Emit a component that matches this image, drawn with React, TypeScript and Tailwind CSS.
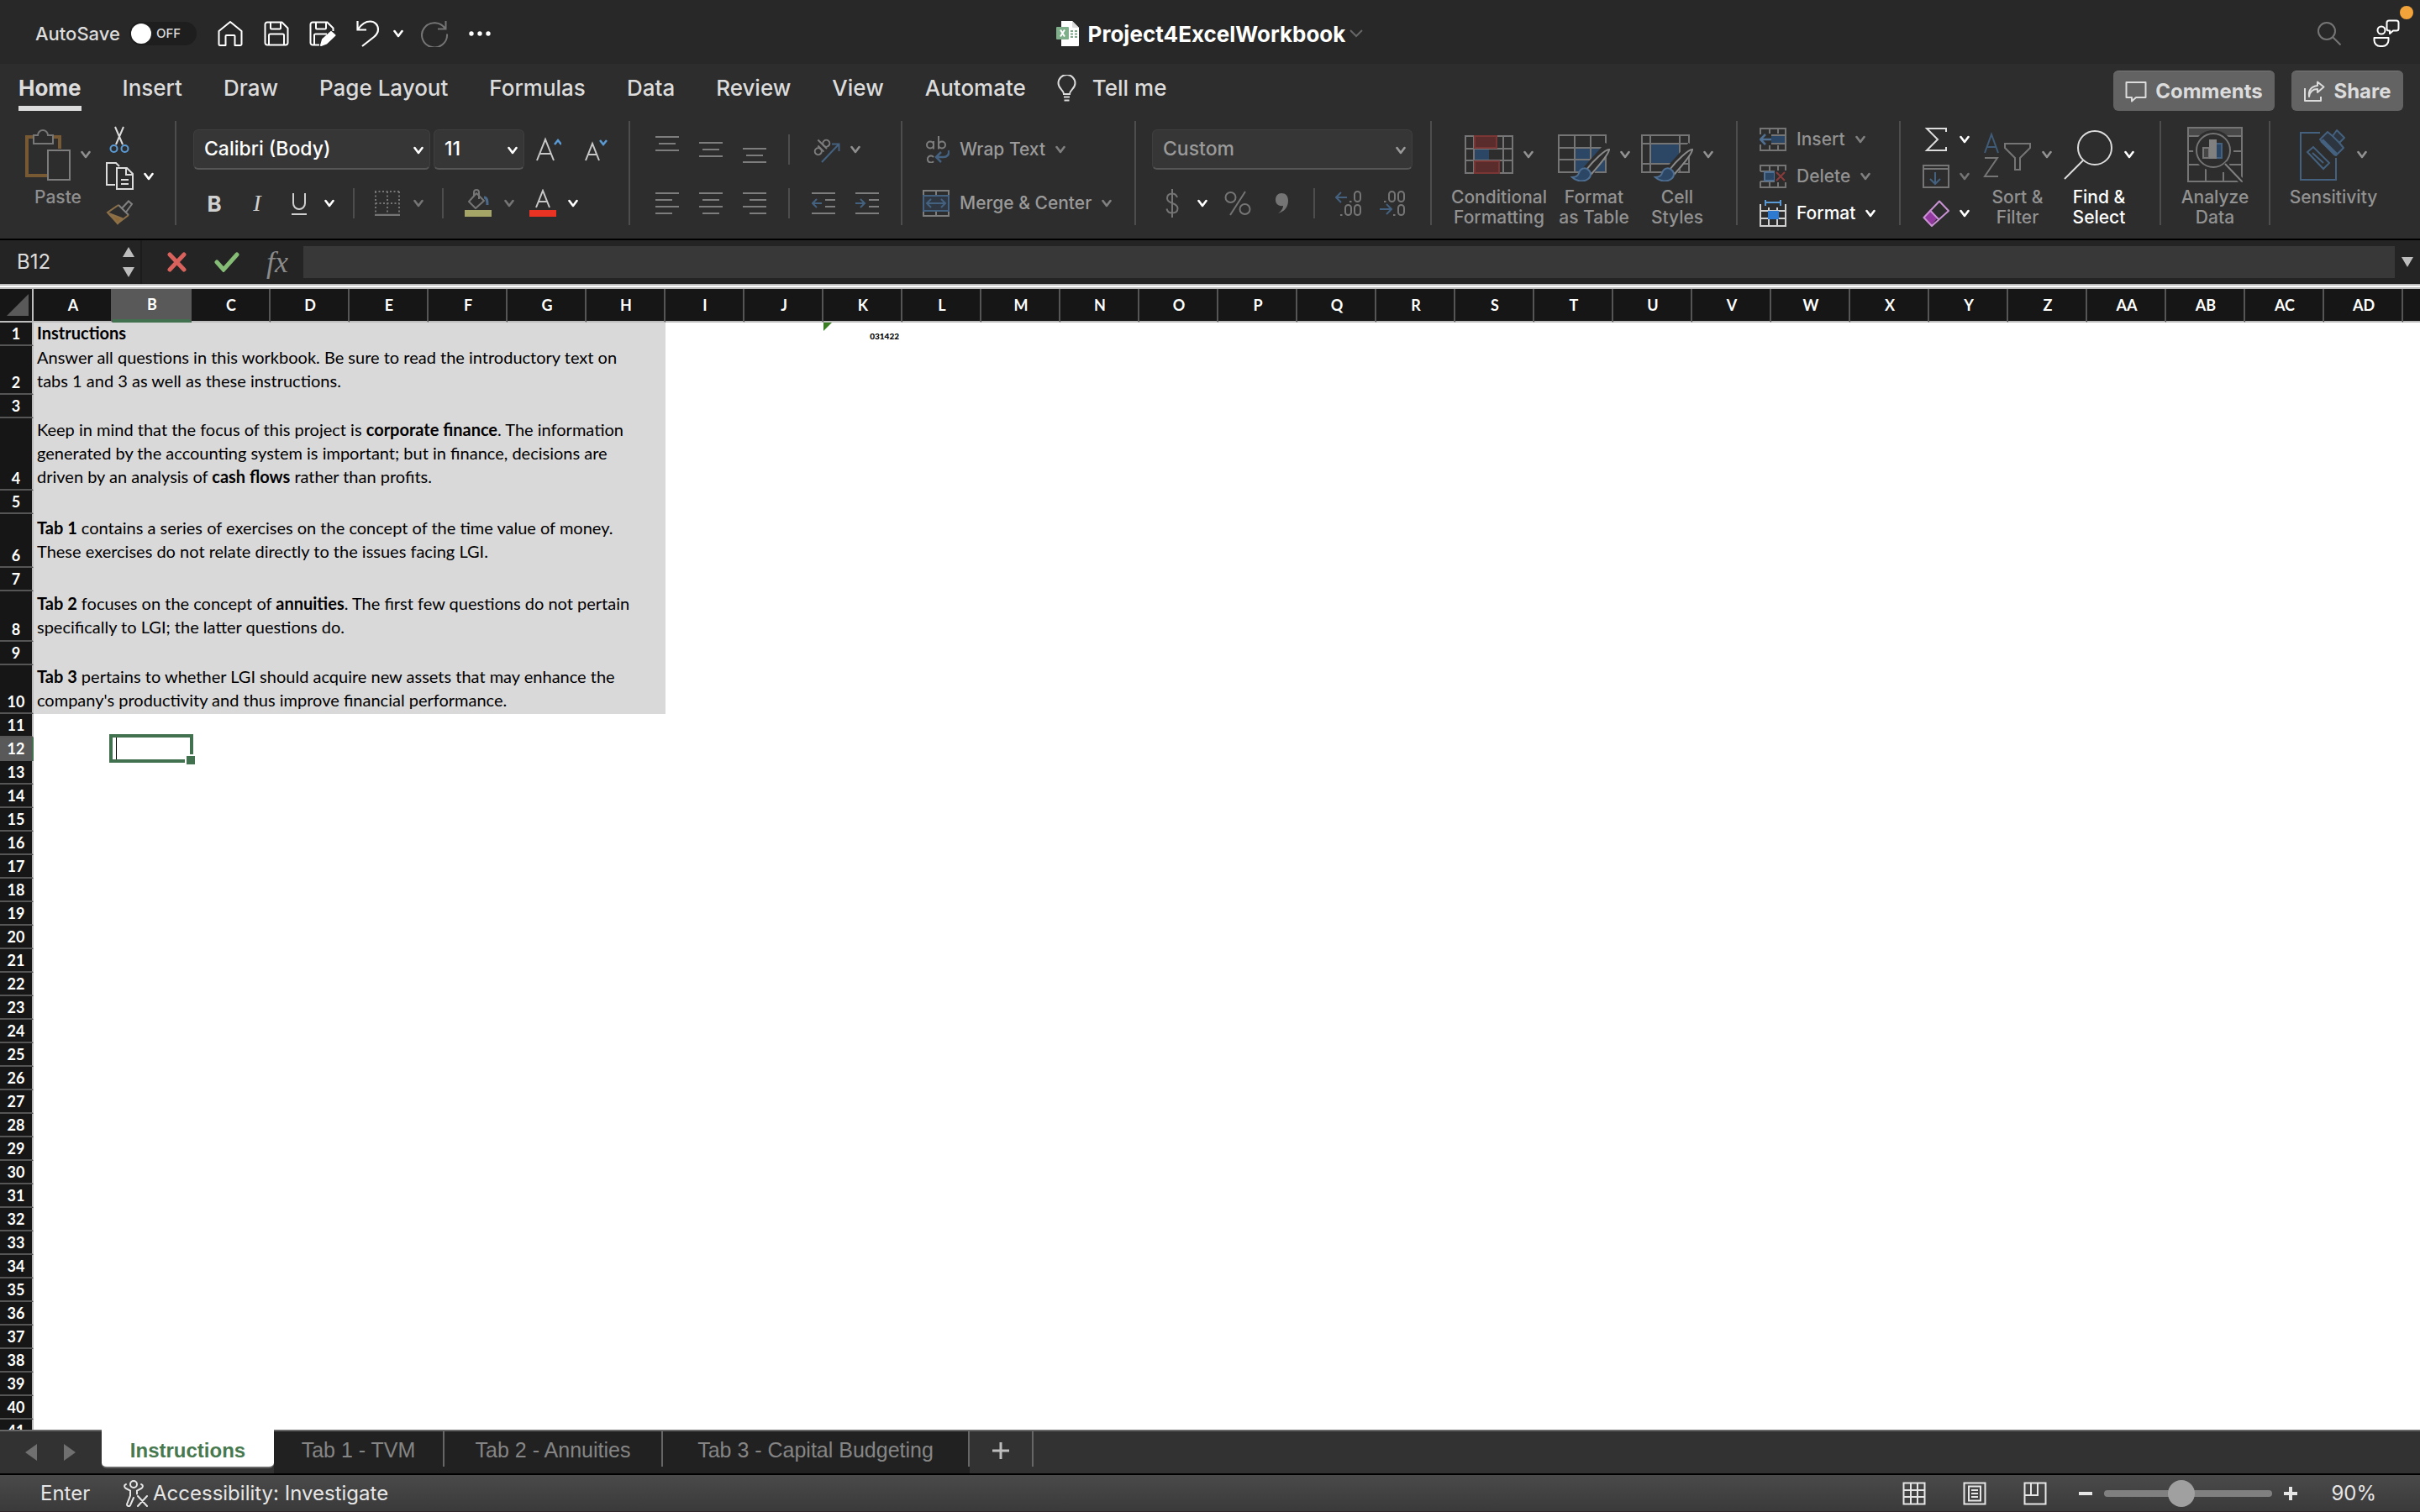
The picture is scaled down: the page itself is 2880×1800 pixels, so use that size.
import React from "react";

type IconProps = { w: number; h: number; className?: string; children: React.ReactNode };

function Icon({ w, h, className = "", children }: IconProps) {
  return (
    <svg
      width={w}
      height={h}
      viewBox={`0 0 ${w} ${h}`}
      fill="none"
      stroke="currentColor"
      strokeWidth={2}
      aria-hidden="true"
      className={`shrink-0 ${className}`}
    >
      {children}
    </svg>
  );
}

function Chevron({ className = "" }: { className?: string }) {
  return (
    <Icon w={12} h={10} className={className}>
      <path d="M1.500 2 6 8l4.500-6" strokeWidth={2.600} strokeLinecap="round" strokeLinejoin="round" />
    </Icon>
  );
}

/* ---------- Title bar ---------- */

function TitleBar() {
  return (
    <header className="grid h-[76px] shrink-0 grid-cols-[1fr_auto_1fr] items-center bg-[#282828] pt-1 text-white">
      <div className="flex items-center pl-[42px]">
        <span className="w-[112px] text-[22px] font-medium text-[#dcdcdc]">AutoSave</span>
        <button
          role="switch"
          aria-checked="false"
          aria-label="AutoSave"
          className="flex h-7 w-20 items-center gap-1.5 rounded-full bg-[#1e1e1e] pl-0.5 text-[15px] font-medium text-[#dcdcdc]"
        >
          <span className="size-6 rounded-full bg-white" />
          OFF
        </button>
        <button aria-label="Home" className="ml-6">
          <Icon w={32} h={32}>
            <path d="M2.500 13 16 2l13.500 11v15.500a1.500 1.500 0 0 1-1.500 1.500h-6.500V19a1 1 0 0 0-1-1h-9a1 1 0 0 0-1 1v11H4a1.500 1.500 0 0 1-1.500-1.500z" strokeLinejoin="round" />
          </Icon>
        </button>
        <button aria-label="Save" className="ml-6">
          <Icon w={30} h={30}>
            <path d="M4 1.500h17.500l7 7V26a2.500 2.500 0 0 1-2.500 2.500H4A2.500 2.500 0 0 1 1.500 26V4A2.500 2.500 0 0 1 4 1.500z" strokeLinejoin="round" />
            <path d="M8 2v6.500a1 1 0 0 0 1 1h10a1 1 0 0 0 1-1V2M6 28V17a1.500 1.500 0 0 1 1.500-1.500h15A1.500 1.500 0 0 1 24 17v11" />
          </Icon>
        </button>
        <button aria-label="Save As" className="ml-6">
          <Icon w={32} h={30}>
            <path d="M12 28.500H4A2.500 2.500 0 0 1 1.500 26V4A2.500 2.500 0 0 1 4 1.500h17.500l7 7V12M8 2v6.500a1 1 0 0 0 1 1h10a1 1 0 0 0 1-1V2M6 28V17a1.500 1.500 0 0 1 1.500-1.500H21" />
            <path d="m14 29 2-7 10-9 4.500 4-10 9.500z" fill="currentColor" strokeLinejoin="round" />
          </Icon>
        </button>
        <button aria-label="Undo" className="ml-6">
          <Icon w={28} h={32}>
            <path d="M1.500 1v10.500H12M2 11C6 5 11 1.500 16.500 1.500c5.500 0 9.500 4 9.500 9.500 0 3.500-2 6.500-5 9L7 31" strokeWidth={2.200} />
          </Icon>
        </button>
        <button aria-label="Undo history" className="ml-4">
          <Chevron />
        </button>
        <button aria-label="Redo" className="ml-5 text-[#757575]">
          <Icon w={34} h={32}>
            <path d="M30.500 1v9.500H21M30 10.500A15 14.500 0 1 0 32 16.500" />
          </Icon>
        </button>
        <button aria-label="More" className="ml-6">
          <Icon w={28} h={8}>
            <g fill="currentColor" stroke="none">
              <circle cx="3" cy="4" r="2.700" />
              <circle cx="13" cy="4" r="2.700" />
              <circle cx="23" cy="4" r="2.700" />
            </g>
          </Icon>
        </button>
      </div>
      <button className="flex items-center text-[26px] font-bold">
        <Icon w={28} h={30} className="mr-2.5">
          <path d="M6 0h13l8 8v21a1 1 0 0 1-1 1H6z" fill="#fff" stroke="none" />
          <path d="M19 0v7a1 1 0 0 0 1 1h7" fill="#ddd" stroke="none" />
          <path d="M17 12h3M22 12h3M17 15.500h3M22 15.500h3M17 19h3M22 19h3" stroke="#7fa88a" />
          <rect x="0" y="7" width="15" height="15" rx="1" fill="#7fae8a" stroke="none" />
          <path d="m5 10.500 5 8M10 10.500l-5 8" stroke="#fff" />
        </Icon>
        Project4ExcelWorkbook
        <Icon w={18} h={12} className="ml-1 text-[#666]">
          <path d="m2 2 7 7 7-7" />
        </Icon>
      </button>
      <div className="flex items-center justify-end pr-6">
        <button aria-label="Search" className="mr-[38px] text-[#757575]">
          <Icon w={28} h={28}>
            <circle cx="11" cy="11" r="10" />
            <path d="m18 18 9.500 9.500" />
          </Icon>
        </button>
        <button aria-label="Share activity" className="relative">
          <Icon w={32} h={34}>
            <circle cx="10" cy="13" r="4.500" />
            <path d="M1.500 22h17v3a7 7 0 0 1-7 7h-3a7 7 0 0 1-7-7zM19 1.500h9A2.500 2.500 0 0 1 30.500 4v7a2.500 2.500 0 0 1-2.500 2.500h-4l-4 3.500v-3.500h-1A2.500 2.500 0 0 1 16.500 11V4A2.500 2.500 0 0 1 19 1.500z" strokeLinejoin="round" />
          </Icon>
          <span className="absolute -top-4 -right-4 size-4 rounded-full bg-[#f2a33a]" />
        </button>
      </div>
    </header>
  );
}

/* ---------- Ribbon tabs ---------- */

const ribbonTabs = ["Insert", "Draw", "Page Layout", "Formulas", "Data", "Review", "View", "Automate"];

function RibbonTabs() {
  return (
    <div className="flex h-[68px] shrink-0 items-start justify-between pr-5 pl-[22px] text-[26px] font-medium text-[#dcdcdc]">
      <nav className="flex gap-[49px] pt-3 leading-[34px]">
        <button className="flex h-11 flex-col items-center border-b-6 border-[#dcdcdc] font-bold">Home</button>
        {ribbonTabs.map((tab) => (
          <button key={tab} className="h-[34px]">
            {tab}
          </button>
        ))}
        <button className="-ml-3 flex h-[34px] items-center gap-[18px]">
          <Icon w={24} h={32}>
            <path d="M8 23c0-5-6.500-6-6.500-13a10 10 0 0 1 20 0c0 7-6.500 8-6.500 13zM8 26.500h7M8.500 30.500h6" />
          </Icon>
          Tell me
        </button>
      </nav>
      <div className="flex gap-5 pt-2 text-[24px] font-bold">
        <button className="flex h-12 w-48 items-center justify-center gap-2.5 rounded-md border-t border-[#777] bg-[#636363]">
          <Icon w={26} h={26}>
            <path d="M1.500 2h23v18H13l-5 4.500V20H1.500z" strokeLinejoin="round" />
          </Icon>
          Comments
        </button>
        <button className="flex h-12 w-[133px] items-center justify-center gap-2.5 rounded-md border-t border-[#777] bg-[#636363]">
          <Icon w={26} h={26}>
            <path d="M2 9v15h19v-5M7 19c1-6 4-9 10-9V14l7.500-6.500L17 1.500V6C10 7 6 11 7 19z" strokeLinejoin="round" />
          </Icon>
          Share
        </button>
      </div>
    </div>
  );
}

/* ---------- Ribbon ---------- */

function Divider({ className = "" }: { className?: string }) {
  return <span className={`h-9 w-0.5 shrink-0 bg-[#4d4d4d] ${className}`} />;
}

function Dropdown({ label, options, className }: { label: string; options: string[]; className: string }) {
  return (
    <div className={`relative h-12 shrink-0 ${className}`}>
      <select
        aria-label={label}
        className="h-full w-full appearance-none rounded-md border border-b-2 border-[#3f3f3f] border-b-[#565656] bg-[#363636] px-3"
        defaultValue={options[0]}
      >
        {options.map((o) => (
          <option key={o}>{o}</option>
        ))}
      </select>
      <Chevron className="pointer-events-none absolute top-5 right-2" />
    </div>
  );
}

function BigButton({
  lines,
  className = "",
  chevron = true,
  children,
}: {
  lines: string[];
  className?: string;
  chevron?: boolean;
  children: React.ReactNode;
}) {
  return (
    <button className={`flex shrink-0 flex-col items-center self-start ${className}`}>
      <span className="flex h-[79px] items-center gap-3">
        {children}
        {chevron && <Chevron />}
      </span>
      {lines.map((l) => (
        <span key={l} className="leading-6 whitespace-nowrap">
          {l}
        </span>
      ))}
    </button>
  );
}

function ClipboardGroup() {
  return (
    <section className="flex w-[210px] shrink-0 border-r-2 border-[#4d4d4d] pl-8">
      <BigButton lines={["Paste"]} className="w-[74px] font-medium text-[#8f8f8f]">
        <Icon w={54} h={62} className="text-[#8a8a8a]">
          <path d="M10 10H2v46h24M34 10h7v14" stroke="#775a34" strokeWidth={4} />
          <path d="M10 8h5a6 6 0 0 1 12 0h6v10H10z" stroke="#777" fill="#2d2d2d" />
          <path d="M27 26h26v35H27z" stroke="#7d7d7d" />
        </Icon>
      </BigButton>
      <div className="flex flex-col justify-between pt-1.5 pl-5 text-[#dcdcdc]">
        <button aria-label="Cut" className="ml-1 self-start">
          <Icon w={24} h={32}>
            <path d="M7 1 16 22M17 1 8 22" />
            <circle cx="5.500" cy="27" r="4" stroke="#5b9bd5" />
            <circle cx="18.500" cy="27" r="4" stroke="#5b9bd5" />
          </Icon>
        </button>
        <button aria-label="Copy" className="flex items-center gap-3">
          <Icon w={33} h={33}>
            <path d="M11 27H1V1h11l4 4" />
            <path d="M13 7h12l7 7v18H13zM24 7v8h8M18 21h9M18 26h9" />
          </Icon>
          <Chevron className="text-white" />
        </button>
        <button aria-label="Format Painter" className="self-start">
          <Icon w={34} h={31} className="text-[#808080]">
            <path d="m19 11 8-8.500 4 3.500-7 9.500M15 7l12 12" />
            <path d="M15 7 2 16l12 13 13-10" stroke="#8d7048" />
            <path d="m6 18 13 5-5 6z" fill="#8d6a38" stroke="#8d7048" />
          </Icon>
        </button>
      </div>
    </section>
  );
}

function FontGroup() {
  return (
    <section className="flex w-[540px] shrink-0 flex-col gap-3 border-r-2 border-[#4d4d4d] pt-2.5 pl-5 text-white">
      <div className="flex items-center gap-1 text-[23px] font-medium">
        <Dropdown label="Font" options={["Calibri (Body)"]} className="w-[282px]" />
        <Dropdown label="Font size" options={["11"]} className="w-[108px]" />
        <button aria-label="Increase font size" className="ml-2.5">
          <Icon w={30} h={30} className="text-[#c8c8c8]">
            <path d="M1 28 11 3l10 25M4.500 20h13" />
            <path d="m22 9 4-5 4 5" stroke="#5b9bd5" strokeWidth={2.500} />
          </Icon>
        </button>
        <button aria-label="Decrease font size" className="ml-6">
          <Icon w={30} h={30} className="text-[#c8c8c8]">
            <path d="M1 28 9 8l8 20M4 21h10" />
            <path d="m18 4 4 5 4-5" stroke="#5b9bd5" strokeWidth={2.500} />
          </Icon>
        </button>
      </div>
      <div className="flex h-14 shrink-0 items-center pl-3.5 text-[26px] text-[#d0d0d0]">
        <button className="w-[22px] font-bold">B</button>
        <button className="ml-7 w-6 font-['Liberation_Serif'] text-[28px] italic">I</button>
        <button aria-label="Underline" className="ml-7">
          <Icon w={20} h={30}>
            <path d="M3 3v12a7 7 0 0 0 14 0V3M1 28h18" />
          </Icon>
        </button>
        <button aria-label="Underline options" className="ml-5 text-white">
          <Chevron />
        </button>
        <Divider className="ml-[22px]" />
        <button aria-label="Borders" className="ml-6 flex items-center gap-4 text-[#757575]">
          <Icon w={30} h={30}>
            <path d="M0 1h30M1 1v28M29 1v28M15 1v28M1 15h28" strokeDasharray="2 2.500" />
            <path d="M0 29h30" strokeWidth={2.500} />
          </Icon>
          <Chevron />
        </button>
        <Divider className="ml-[22px]" />
        <button aria-label="Fill color" className="ml-6 flex items-center gap-3.5 text-[#757575]">
          <Icon w={34} h={34}>
            <path d="m6 15 9-10 9 9-10 9zM12 9V4a3 3 0 0 1 6 0v8" strokeLinejoin="round" />
            <path d="M24 10c4 0 4 5 4 9" stroke="#4c6a8a" strokeWidth={3} />
            <path d="M1 29h32" stroke="#a5a567" strokeWidth={8} />
          </Icon>
          <Chevron />
        </button>
        <button aria-label="Font color" className="ml-[18px] flex items-center gap-3.5 text-[#c8c8c8]">
          <Icon w={32} h={34}>
            <path d="M8 22 16 2l8 20M11 15h10" />
            <path d="M0 29h32" stroke="#ea3323" strokeWidth={8} />
          </Icon>
          <Chevron className="text-white" />
        </button>
      </div>
    </section>
  );
}

function Lines({ label, d, children }: { label: string; d: string; children?: React.ReactNode }) {
  return (
    <button aria-label={label}>
      <Icon w={28} h={32}>
        <path d={d} />
        {children}
      </Icon>
    </button>
  );
}

function AlignmentGroup() {
  return (
    <section className="flex w-[324px] shrink-0 flex-col gap-7 border-r-2 border-[#4d4d4d] pt-4 pl-[30px] text-[#7d7d7d]">
      <div className="flex h-9 items-center gap-6">
        <Lines label="Top Align" d="M0 1h28M4 9h20M0 17h28" />
        <Lines label="Middle Align" d="M0 8h28M4 16h20M0 24h28" />
        <Lines label="Bottom Align" d="M0 15h28M4 23h20M0 31h28" />
        <Divider className="mx-0.5" />
        <button aria-label="Orientation" className="flex items-center gap-3">
          <Icon w={34} h={32}>
            <g transform="rotate(-45 12 14)">
              <circle cx="6" cy="14" r="4" />
              <path d="M10.500 9v10M15.500 4v15" />
              <circle cx="19.500" cy="14" r="4" />
            </g>
            <path d="M12 31 32 10M24 9.500h8.500V18" stroke="#44617f" />
          </Icon>
          <Chevron className="text-[#8f8f8f]" />
        </button>
      </div>
      <div className="flex h-9 items-center gap-6">
        <Lines label="Align Left" d="M0 4h28M0 12h20M0 20h28M0 28h20" />
        <Lines label="Center" d="M0 4h28M4 12h20M0 20h28M4 28h20" />
        <Lines label="Align Right" d="M0 4h28M8 12h20M0 20h28M8 28h20" />
        <Divider className="mx-0.5" />
        <Lines label="Decrease Indent" d="M0 4h28M16 12h12M16 20h12M0 28h28">
          <path d="M1 16h11M6 11l-5 5 5 5" stroke="#44617f" />
        </Lines>
        <Lines label="Increase Indent" d="M0 4h28M16 12h12M16 20h12M0 28h28">
          <path d="M0 16h11M6 11l5 5-5 5" stroke="#44617f" />
        </Lines>
      </div>
    </section>
  );
}

function WrapGroup() {
  return (
    <section className="flex w-[278px] shrink-0 flex-col gap-7 border-r-2 border-[#4d4d4d] pt-4 pl-6 text-[21px] font-medium text-[#9a9a9a]">
      <button className="flex h-9 items-center gap-3">
        <Icon w={32} h={32} className="text-[#7d7d7d]">
          <circle cx="9" cy="10.500" r="4" />
          <path d="M13 6v9.500M19 0v15.500M13 25a4 4 0 1 0 0 5" />
          <circle cx="23" cy="10.500" r="4" />
          <path d="M31 17c1 5-2 8-6 8h-8M22 19l-6 6 6 6" stroke="#44617f" strokeWidth={2.500} />
        </Icon>
        Wrap Text
        <Chevron className="text-[#808080]" />
      </button>
      <button className="flex h-9 items-center gap-3">
        <Icon w={32} h={32}>
          <path d="M1 1h30v30H1zM16 1v6M16 25v6" stroke="#7d7d7d" />
          <path d="M1 7h30v18H1z" stroke="#44617f" fill="#2f3842" />
          <path d="M6 16h20M10 11l-5 5 5 5M22 11l5 5-5 5" stroke="#44617f" />
        </Icon>
        Merge &amp; Center
        <Chevron className="text-[#808080]" />
      </button>
    </section>
  );
}

function NumberGroup() {
  return (
    <section className="flex w-[352px] shrink-0 flex-col gap-3 border-r-2 border-[#4d4d4d] pt-2.5 pl-[19px] text-[23px] font-medium text-[#9a9a9a]">
      <Dropdown label="Number format" options={["Custom"]} className="w-[310px]" />
      <div className="flex h-14 shrink-0 items-center pl-3.5 text-[#757575]">
        <button aria-label="Currency" className="w-6">
          <Icon w={20} h={34}>
            <path d="M16 10c-1-3-3-4.500-6-4.500-3.500 0-6 2-6 5.500 0 7.500 12.500 4.500 12.500 12 0 3.500-2.500 5.500-6.500 5.500-3.500 0-6-2-6.500-5M10 0v34" />
          </Icon>
        </button>
        <button aria-label="Currency options" className="ml-4 text-white">
          <Chevron />
        </button>
        <button aria-label="Percent" className="ml-5">
          <Icon w={32} h={30}>
            <circle cx="7.500" cy="8" r="6" />
            <circle cx="24.500" cy="22" r="6" />
            <path d="M25 1 7 29" />
          </Icon>
        </button>
        <button aria-label="Comma style" className="ml-7">
          <Icon w={18} h={28}>
            <path d="M8 2c5 0 8 3 8 9 0 8-5 13-12 15 4-3 6-6 6-9-6 1-9-3-9-7 0-5 3-8 7-8z" fill="currentColor" stroke="none" />
          </Icon>
        </button>
        <Divider className="ml-7" />
        <button aria-label="Increase decimal" className="ml-6">
          <Icon w={32} h={32}>
            <path d="M1 9h13M7 3 1 9l6 6" stroke="#44617f" />
            <rect x="23" y="2" width="7" height="12" rx="3.500" />
            <rect x="12" y="18" width="7" height="12" rx="3.500" />
            <rect x="23" y="18" width="7" height="12" rx="3.500" />
            <path d="M17 14h2.500M6 30h2.500" />
          </Icon>
        </button>
        <button aria-label="Decrease decimal" className="ml-5">
          <Icon w={32} h={32}>
            <path d="M1 23h13M9 17l6 6-6 6" stroke="#44617f" />
            <rect x="12" y="2" width="7" height="12" rx="3.500" />
            <rect x="23" y="2" width="7" height="12" rx="3.500" />
            <rect x="23" y="18" width="7" height="12" rx="3.500" />
            <path d="M6 14h2.500M17 30h2.500" />
          </Icon>
        </button>
      </div>
    </section>
  );
}

function Brush() {
  return (
    <g>
      <path d="M57 14 32 42l7 5 21-31z" fill="#2d2d2d" stroke="#2d2d2d" strokeWidth={6} />
      <path d="M61 18c-4-.500-19 13-27 24l6 5c8-9 21-24 21-29z" fill="#2d2d2d" stroke="#8a8a8a" />
      <path d="M17 51c5 0 7-2 8-5 2-6 7-7 11-4s4 8 0 11c-5 4-14 3-19-2z" fill="#2c4766" stroke="#4f7093" />
    </g>
  );
}

function StylesGroup() {
  return (
    <section className="flex w-[364px] shrink-0 border-r-2 border-[#4d4d4d] pl-4 text-[21px] font-medium text-[#929292]">
      <BigButton lines={["Conditional", "Formatting"]} className="w-32">
        <Icon w={58} h={46}>
          <path d="M12 1h26v14H12zM12 31h29v14H12z" fill="#5a2c2c" stroke="none" />
          <path d="M12 16h17v14H12z" fill="#2c4766" stroke="none" />
          <path d="M1 1h56v44H1zM1 16h56M1 30h56M11 1v44M46 1v44" stroke="#757575" />
          <path d="M12 1h26v14H12zM12 31h29v14H12z" stroke="#7a3535" />
        </Icon>
      </BigButton>
      <BigButton lines={["Format", "as Table"]} className="w-[98px]">
        <Icon w={62} h={56} className="mt-2">
          <path d="M20 16h36v29H20z" fill="#2c4766" stroke="none" />
          <path d="M1 1h56v44H1zM1 16h56M1 30h56M20 1v44M39 1v44" stroke="#757575" />
          <Brush />
        </Icon>
      </BigButton>
      <BigButton lines={["Cell", "Styles"]} className="w-[100px]">
        <Icon w={62} h={56} className="mt-2">
          <path d="M12 12h34v22H12z" fill="#2c4766" stroke="none" />
          <path d="M1 1h56v44H1zM1 11h56M1 35h56M11 1v44M46 1v44" stroke="#757575" />
          <Brush />
        </Icon>
      </BigButton>
    </section>
  );
}

function CellsGroup() {
  return (
    <section className="flex w-[194px] shrink-0 flex-col border-r-2 border-[#4d4d4d] pl-[26px] text-[21px] font-medium text-[#929292]">
      <button className="flex h-11 shrink-0 items-center gap-3">
        <Icon w={32} h={28}>
          <path d="M14 9h17v10H14z" fill="#2c4766" stroke="none" />
          <path d="M1 8V1h30v26H1v-7M12 1v6M22 1v6M12 21v6M22 21v6M14 9h17M14 19h17" stroke="#757575" />
          <path d="M1 14h13M7 8l-6 6 6 6" stroke="#4f7093" strokeWidth={2.500} />
        </Icon>
        Insert
        <Chevron className="text-[#808080]" />
      </button>
      <button className="flex h-11 shrink-0 items-center gap-3">
        <Icon w={32} h={28}>
          <path d="M1 8V1h30v7M1 20v7h30v-7M12 1v7M22 1v7M12 20v7M22 20v7M1 8h30M1 20h30" stroke="#757575" />
          <path d="M6 9h12v10H6z" fill="#2c4766" stroke="#4f7093" />
          <path d="M18 7h14v14H18z" fill="#2d2d2d" stroke="none" />
          <path d="m20 9 10 10M30 9 20 19" stroke="#8a3b3b" />
        </Icon>
        Delete
        <Chevron className="text-[#808080]" />
      </button>
      <button className="flex h-11 shrink-0 items-center gap-3 text-white">
        <Icon w={32} h={32}>
          <path d="M1 5v26h30V5M1 13h30M1 22h30M11 9v22M21 9v22" stroke="#d0d0d0" />
          <path d="M10 13h13v10H10z" fill="#2f7ad1" stroke="none" />
          <path d="M7 3h18M7 0v7M25 0v7" stroke="#5b9bd5" />
        </Icon>
        Format
        <Chevron />
      </button>
    </section>
  );
}

function EditingGroup() {
  return (
    <section className="flex w-[310px] shrink-0 border-r-2 border-[#4d4d4d] pl-[26px] text-[21px] font-medium text-[#929292]">
      <div className="flex w-16 shrink-0 flex-col">
        <button aria-label="AutoSum" className="flex h-11 shrink-0 items-center gap-3 text-white">
          <Icon w={32} h={30} className="text-[#dcdcdc]">
            <path d="M28 6V2H5l13 13L5 28h23v-4" />
          </Icon>
          <Chevron />
        </button>
        <button aria-label="Fill" className="flex h-11 shrink-0 items-center gap-3">
          <Icon w={32} h={28}>
            <path d="M1 1h30v26H1zM1 5h30" stroke="#757575" />
            <path d="M15 9v14M9 17l6 6 6-6" stroke="#44617f" />
          </Icon>
          <Chevron className="text-[#757575]" />
        </button>
        <button aria-label="Clear" className="flex h-11 shrink-0 items-center gap-3 text-white">
          <Icon w={32} h={32}>
            <path d="m1 21 8-10 9 10-8 10z" fill="#93389f" stroke="none" />
            <path d="M20 1.500 31 13 11 31 1.500 21zM9 12.500 19 23" stroke="#c993d3" strokeLinejoin="round" />
          </Icon>
          <Chevron />
        </button>
      </div>
      <BigButton lines={["Sort &", "Filter"]} className="w-[98px]">
        <Icon w={58} h={54}>
          <path d="M2 25 10 3l8 22M5 18h10" stroke="#3f5b78" />
          <path d="M2 31h15L2 53h16" stroke="#757575" />
          <path d="M26 14h30v5L44 31v14h-6V31L26 19z" stroke="#757575" />
        </Icon>
      </BigButton>
      <BigButton lines={["Find &", "Select"]} className="w-24 text-white">
        <Icon w={60} h={60} className="text-[#dcdcdc]">
          <circle cx="37" cy="22" r="20" />
          <path d="M23 37 1 59" />
        </Icon>
      </BigButton>
    </section>
  );
}

function AnalyzeGroup() {
  return (
    <section className="flex w-[130px] shrink-0 justify-center border-r-2 border-[#4d4d4d] text-[21px] font-medium text-[#929292]">
      <BigButton lines={["Analyze", "Data"]} chevron={false}>
        <Icon w={66} h={66}>
          <path d="M1 1h64v9H1z" fill="#484848" stroke="none" />
          <path d="M1 1h64v64H1zM1 11h64M1 29h10M55 29h10M1 45h16M50 45h15M22 50v15M43 54v11" stroke="#757575" />
          <circle cx="31" cy="28" r="24" fill="#2d2d2d" stroke="none" />
          <circle cx="31" cy="28" r="20" stroke="#757575" />
          <path d="m44 44 21 21" stroke="#2d2d2d" strokeWidth={7} />
          <path d="m45 44 20 21" stroke="#808080" />
          <path d="M19 25h7v12h-7z" stroke="#757575" fill="#454545" />
          <path d="M34 20h7v17h-7z" fill="#2c4766" stroke="#44617f" />
          <path d="M26 15h9v23h-9z" fill="#808080" stroke="none" />
        </Icon>
      </BigButton>
    </section>
  );
}

function SensitivityGroup() {
  return (
    <section className="flex min-w-0 flex-1 pl-3.5 text-[21px] font-medium text-[#929292]">
      <BigButton lines={["Sensitivity"]} className="w-[122px]">
        <Icon w={56} h={62} className="text-[#44617f]">
          <path d="M24 5H1v56h42V35" />
          <path d="m9 28 7-6 19 19-7 7zM15 29l13 12" />
          <path d="m24 13 9-9 6 5 5-7 9 9-6 6 5 6-9 9z" fill="#2d3640" strokeLinejoin="round" />
          <path d="m26 14 17 17" strokeWidth={5} />
          <path d="m39 9 8 8" />
        </Icon>
      </BigButton>
    </section>
  );
}

function Ribbon() {
  return (
    <div className="flex h-[142px] shrink-0 border-b-2 border-black pb-4 text-[21px]">
      <ClipboardGroup />
      <FontGroup />
      <AlignmentGroup />
      <WrapGroup />
      <NumberGroup />
      <StylesGroup />
      <CellsGroup />
      <EditingGroup />
      <AnalyzeGroup />
      <SensitivityGroup />
    </div>
  );
}

/* ---------- Formula bar ---------- */

function FormulaBar() {
  return (
    <div className="flex h-[52px] shrink-0 items-center bg-[#242424]">
      <div className="flex h-full w-[169px] items-center border-r-2 border-[#1c1c1c] text-[#bdbdbd]">
        <input
          aria-label="Name box"
          defaultValue="B12"
          className="w-[146px] bg-transparent pl-5 text-[24px] text-[#dcdcdc]"
        />
        <div className="flex flex-col gap-3">
          <button aria-label="Previous name">
            <Icon w={14} h={12}>
              <path d="M7 0l7 12H0z" fill="currentColor" stroke="none" />
            </Icon>
          </button>
          <button aria-label="Next name">
            <Icon w={14} h={12}>
              <path d="M0 0h14L7 12z" fill="currentColor" stroke="none" />
            </Icon>
          </button>
        </div>
      </div>
      <button aria-label="Cancel" className="ml-[30px]">
        <Icon w={24} h={24} className="text-[#d9625c]">
          <path d="m3 3 17 18M20 3 3 21" strokeWidth={5} strokeLinecap="round" />
        </Icon>
      </button>
      <button aria-label="Enter" className="ml-8">
        <Icon w={30} h={24} className="text-[#86bd76]">
          <path d="m3 12 8 9L27 3" strokeWidth={5} strokeLinecap="round" />
        </Icon>
      </button>
      <button className="ml-8 w-11 text-left font-['Liberation_Serif'] text-[36px] leading-[44px] text-[#8a8a8a] italic">
        fx
      </button>
      <input aria-label="Formula" className="h-[38px] min-w-0 flex-1 bg-[#383838] px-2 text-white" />
      <button aria-label="Expand formula bar" className="px-2 text-[#bdbdbd]">
        <Icon w={14} h={12}>
          <path d="M0 0h14L7 12z" fill="currentColor" stroke="none" />
        </Icon>
      </button>
    </div>
  );
}

/* ---------- Sheet ---------- */

const columns = [..."ABCDEFGHIJKLMNOPQRSTUVWXYZ", "AA", "AB", "AC", "AD"];

const notes: { height: string; text: React.ReactNode }[] = [
  { height: "h-7", text: <b>Instructions</b> },
  {
    height: "h-[58px]",
    text: (
      <>
        Answer all questions in this workbook. Be sure to read the introductory text on
        <br />
        tabs 1 and 3 as well as these instructions.
      </>
    ),
  },
  { height: "h-7", text: null },
  {
    height: "h-[86px]",
    text: (
      <>
        Keep in mind that the focus of this project is <b>corporate finance</b>. The information
        <br />
        generated by the accounting system is important; but in finance, decisions are
        <br />
        driven by an analysis of <b>cash flows</b> rather than profits.
      </>
    ),
  },
  { height: "h-7", text: null },
  {
    height: "h-16",
    text: (
      <>
        <b>Tab 1</b> contains a series of exercises on the concept of the time value of money.
        <br />
        These exercises do not relate directly to the issues facing LGI.
      </>
    ),
  },
  { height: "h-7", text: null },
  {
    height: "h-[60px]",
    text: (
      <>
        <b>Tab 2</b> focuses on the concept of <b>annuities</b>. The first few questions do not pertain
        <br />
        specifically to LGI; the latter questions do.
      </>
    ),
  },
  { height: "h-7", text: null },
  {
    height: "h-[58px]",
    text: (
      <>
        <b>Tab 3</b> pertains to whether LGI should acquire new assets that may enhance the
        <br />
        company's productivity and thus improve financial performance.
      </>
    ),
  },
];

const plainRows = Array.from({ length: 31 }, (_, i) => i + 11);

function headerRowColors(n: number) {
  if (n === 12) return "border-r-[#41714f] border-b-[#595959] bg-[#595959]";
  return "border-r-[#bdbdbd] border-b-[#555] bg-[#161616]";
}

function headerColumnColors(c: string) {
  if (c === "B") return "border-b-4 border-r-[#595959] border-b-[#41714f] bg-[#595959]";
  if (c === "A") return "border-b-2 border-r-[#595959] border-b-[#bdbdbd]";
  return "border-b-2 border-r-[#555] border-b-[#bdbdbd]";
}

function RowHeader({ n, height }: { n: number; height: string }) {
  return (
    <th scope="row" className="p-0">
      <div
        className={`flex items-end justify-center border-r-2 border-b-2 text-[18px] leading-[26px] font-bold text-white ${height} ${headerRowColors(n)}`}
      >
        {n}
      </div>
    </th>
  );
}

function Sheet() {
  return (
    <main className="min-h-0 flex-1 overflow-hidden bg-white font-['Lato',sans-serif]">
      <table className="w-full table-fixed border-separate border-spacing-0">
        <thead>
          <tr className="h-10 bg-[#161616] text-[18px] text-white">
            <th className="w-10 border-r-2 border-b-2 border-[#bdbdbd] p-0">
              <Icon w={28} h={26} className="ml-2">
                <path d="M26 0v26H0z" fill="#595959" stroke="none" />
              </Icon>
            </th>
            {columns.map((c) => (
              <th
                key={c}
                scope="col"
                className={`w-[94px] border-r-2 p-0 pl-0.5 font-bold ${headerColumnColors(c)}`}
              >
                {c}
              </th>
            ))}
            <th className="border-b-2 border-[#bdbdbd] p-0" />
          </tr>
        </thead>
        <tbody>
          {notes.map((row, i) => (
            <tr key={i}>
              <RowHeader n={i + 1} height={row.height} />
              <td colSpan={8} className="bg-[#d9d9d9] p-0">
                <div className={`flex items-center pl-1 ${row.height}`}>
                  <p className="-mt-1 text-[20px] leading-7 whitespace-nowrap text-black">{row.text}</p>
                </div>
              </td>
              {columns.slice(8).map((c) => (
                <td key={c} className="p-0 align-top">
                  {i === 0 && c === "K" && (
                    <div className="relative flex h-7 items-center justify-end pt-1 pr-1 text-[10px] font-black text-black">
                      <Icon w={10} h={10} className="absolute top-0 left-0">
                        <path d="M0 0h10L0 10z" fill="#3a7d23" stroke="none" />
                      </Icon>
                      031422
                    </div>
                  )}
                </td>
              ))}
              <td className="p-0" />
            </tr>
          ))}
          {plainRows.map((n) => (
            <tr key={n}>
              <RowHeader n={n} height="h-7" />
              {columns.map((c) => (
                <td key={c} className="p-0">
                  {n === 12 && c === "B" && (
                    <div className="relative h-7">
                      <div className="absolute -top-1 -right-0.5 -bottom-0.5 -left-1 border-4 border-[#41714f] bg-white pl-1">
                        <span className="block h-full w-px bg-black" />
                        <span className="absolute -right-1.5 -bottom-1.5 size-3 border-t-2 border-l-2 border-white bg-[#41714f]" />
                      </div>
                    </div>
                  )}
                </td>
              ))}
              <td className="p-0" />
            </tr>
          ))}
        </tbody>
      </table>
    </main>
  );
}

/* ---------- Sheet tabs and status bar ---------- */

function SheetTabs() {
  return (
    <nav className="flex h-[54px] shrink-0 border-t-2 border-b-2 border-t-[#666] border-b-black bg-[#323232] font-['Liberation_Sans',sans-serif] text-[25px] text-[#858585]">
      <div className="flex w-[121px] items-center gap-8 pl-[30px] text-[#707070]">
        <button aria-label="Previous sheet">
          <Icon w={14} h={20}>
            <path d="M14 0v20L0 10z" fill="currentColor" stroke="none" />
          </Icon>
        </button>
        <button aria-label="Next sheet">
          <Icon w={14} h={20}>
            <path d="M0 0v20l14-10z" fill="currentColor" stroke="none" />
          </Icon>
        </button>
      </div>
      <button className="-mt-0.5 h-[46px] w-[205px] rounded-b-md border-b-2 border-[#666] bg-white pt-1.5 text-[24px] font-bold text-[#47794f]">
        Instructions
      </button>
      <div className="flex bg-[#212121] pb-2">
        <button className="w-[203px] border-r-2 border-[#666] pt-1">Tab 1 - TVM</button>
        <button className="w-[260px] border-r-2 border-[#666] pt-1">Tab 2 - Annuities</button>
        <button className="w-[365px] border-r-2 border-[#666] pt-1">Tab 3 - Capital Budgeting</button>
      </div>
      <button
        aria-label="Add sheet"
        className="mb-2 flex w-[76px] items-center justify-center border-r-2 border-[#666] pt-1 text-[#bdbdbd]"
      >
        <Icon w={20} h={20}>
          <path d="M10 0v20M0 10h20" strokeWidth={3} />
        </Icon>
      </button>
    </nav>
  );
}

function StatusBar() {
  return (
    <footer className="flex h-11 shrink-0 items-center justify-between border-b border-[#2e2528] bg-linear-to-b from-[#4a4a4a] to-[#3a3a3a] pr-[52px] pl-12 text-[24px] text-[#e6e6e6]">
      <div className="flex items-center">
        <span className="w-[98px]">Enter</span>
        <button className="flex items-center gap-1">
          <Icon w={32} h={32}>
            <circle cx="13" cy="5" r="4" />
            <path d="M4 5c-3 1-2 4 0 5l5 2.500v6L5 29c0 2 3 3 4 1l4-9M22 5c3 1 2 4 0 5l-5 2.500v4M18 19l11 12M29 19 18 31" strokeLinecap="round" />
          </Icon>
          Accessibility: Investigate
        </button>
      </div>
      <div className="flex items-center">
        <button aria-label="Normal view">
          <Icon w={28} h={28}>
            <path d="M1.500 1.500h25v25h-25zM10 1v26M18 1v26M1 10h26M1 18h26" />
          </Icon>
        </button>
        <button aria-label="Page layout view" className="ml-11">
          <Icon w={28} h={28}>
            <path d="M1.500 1.500h25v25h-25zM7 5.500h14v17H7zM10 10h8M10 14h8M10 18h8" />
          </Icon>
        </button>
        <button aria-label="Page break view" className="ml-11">
          <Icon w={28} h={28}>
            <path d="M1.500 1.500h25v25h-25zM1 16h16V1M9 1v15" />
          </Icon>
        </button>
        <button aria-label="Zoom out" className="ml-[38px]">
          <Icon w={16} h={16}>
            <path d="M0 8h16" strokeWidth={4} />
          </Icon>
        </button>
        <input
          type="range"
          aria-label="Zoom"
          min={0}
          max={200}
          defaultValue={90}
          className="mx-3.5 h-2 w-[200px] appearance-none rounded-full bg-[#808080] [&::-webkit-slider-thumb]:size-8 [&::-webkit-slider-thumb]:appearance-none [&::-webkit-slider-thumb]:rounded-full [&::-webkit-slider-thumb]:bg-[#a0a0a0]"
        />
        <button aria-label="Zoom in">
          <Icon w={16} h={16}>
            <path d="M0 8h16M8 0v16" strokeWidth={4} />
          </Icon>
        </button>
        <span className="ml-10">90%</span>
      </div>
    </footer>
  );
}

export default function App() {
  return (
    <div className="flex h-screen flex-col overflow-hidden bg-[#2d2d2d] font-['Inter',sans-serif]">
      <TitleBar />
      <RibbonTabs />
      <Ribbon />
      <FormulaBar />
      <div className="h-1.5 shrink-0 border-y-2 border-[#bdbdbd] bg-white" />
      <Sheet />
      <SheetTabs />
      <StatusBar />
    </div>
  );
}
